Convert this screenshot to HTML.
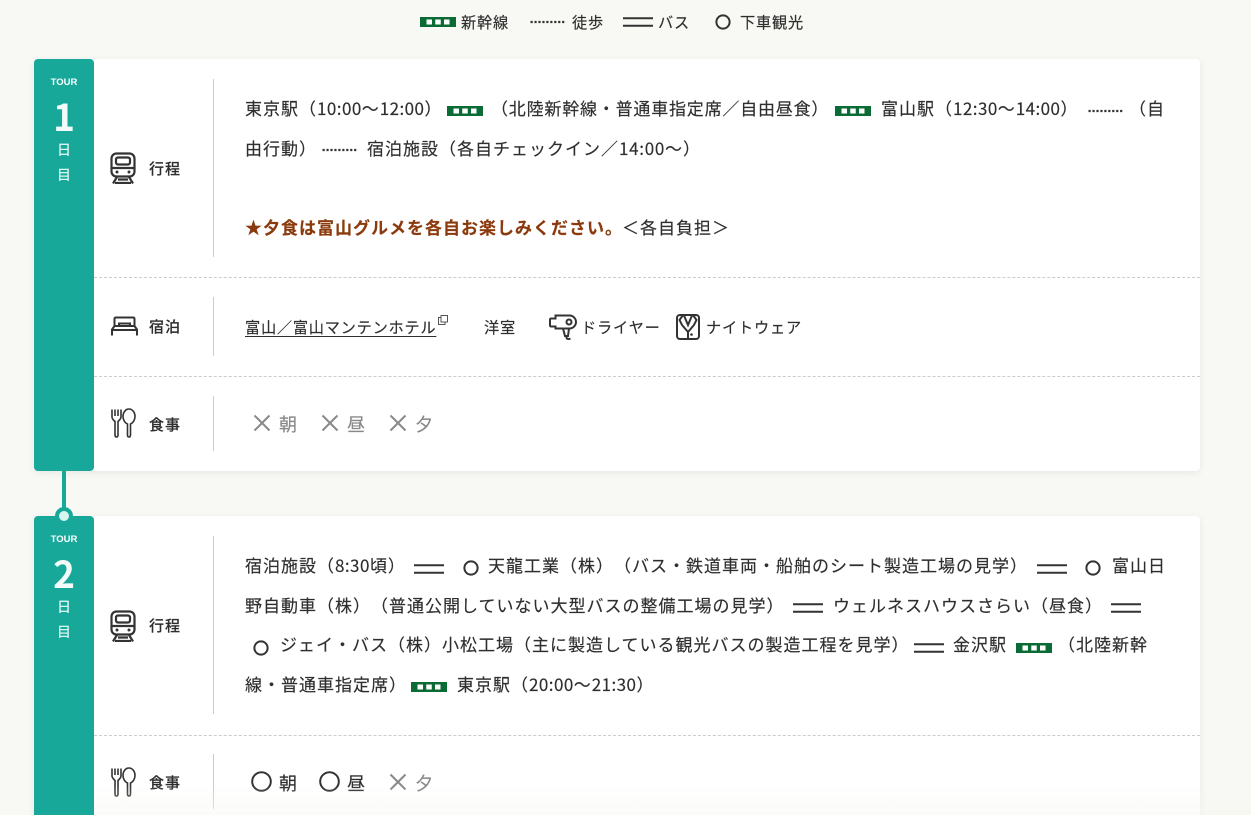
<!DOCTYPE html>
<html lang="ja"><head><meta charset="utf-8"><title>行程</title>
<style>
*{margin:0;padding:0;box-sizing:border-box}
html,body{width:1251px;height:815px;overflow:hidden;background:#f8f8f4}
body{position:relative;font-family:"Noto Sans CJK JP","Liberation Sans",sans-serif;color:#2e2e2e;text-spacing-trim:space-all}
.t{position:absolute;white-space:nowrap;line-height:24px;font-size:17px;letter-spacing:1px;-webkit-text-stroke:.15px currentColor}
.t i{font-style:normal;letter-spacing:.45px}
.s{font-size:15.2px;letter-spacing:.82px}
.lb{font-size:15px;letter-spacing:1px;font-weight:500}
.m{font-size:18px;color:#888;letter-spacing:0}
.d{color:#2e2e2e}
.card{position:absolute;left:34px;width:1166px;background:#fff;border-radius:4px;box-shadow:0 2px 8px rgba(0,0,0,.07)}
.tab{position:absolute;left:34px;width:60px;background:#17a89a;border-radius:4px}
.c{position:absolute;left:34px;width:60px;text-align:center;color:#fff;white-space:nowrap}
.tour{font:bold 9.500px/12px "Liberation Sans",sans-serif}
.num{font-size:37px;line-height:44px;font-weight:700;color:#f2fbf9}
.day{font-size:14px;line-height:20px;font-weight:500;color:#d8f5ee}
.v{position:absolute;left:213px;width:1px;background:#ccc}
.h{position:absolute;left:94px;width:1106px;border-top:1px dashed #ccc}
svg{position:absolute;overflow:visible}
</style></head><body>
<svg width="0" height="0" style="position:absolute"><defs>
<symbol id="sk" viewBox="0 0 36 10"><rect width="36" height="10" fill="#0b6b35"/><rect x="6.500" y="2.500" width="5.500" height="5" fill="#fff"/><rect x="15.250" y="2.500" width="5.500" height="5" fill="#fff"/><rect x="24" y="2.500" width="5.500" height="5" fill="#fff"/></symbol>
<symbol id="dt" viewBox="0 0 36 4"><line x1="0.5" y1="2" x2="36" y2="2" stroke="#333" stroke-width="2.2" stroke-dasharray="2.2 1.75"/></symbol>
<symbol id="bs" viewBox="0 0 30 10"><path d="M0 1.2H30M0 8.8H30" stroke="#333" stroke-width="2" fill="none"/></symbol>
<symbol id="ci" viewBox="0 0 16 16"><circle cx="8" cy="8" r="6.6" fill="none" stroke="#333" stroke-width="2"/></symbol>
<symbol id="train" viewBox="0 0 26 32"><g fill="none" stroke="#333" stroke-width="2.200"><rect x="1.500" y="1.500" width="23" height="23" rx="5"/><rect x="6" y="5.500" width="14" height="7" rx="2"/><path d="M1.500 16H24.500M8 27.500H18M5 31H21M3 31.500L7 25M23 31.500L19 25"/></g><circle cx="7" cy="20" r="1.500" fill="#333"/><circle cx="19" cy="20" r="1.500" fill="#333"/></symbol>
<symbol id="bed" viewBox="0 0 27 20"><g fill="none" stroke="#333" stroke-width="2"><path d="M3.500 10V3Q3.500 1.500 5 1.500H22Q23.500 1.500 23.500 3V10M8 10V7.500H19V10M3.500 10H23.500L26 13.500V19.500M1 19.500V13.500L3.500 10M1 14H26"/></g></symbol>
<symbol id="fk" viewBox="0 0 26 30"><g fill="none" stroke="#333" stroke-width="1.600"><path d="M2 1.500V9C2 11 4 12.500 5 13.500V27C5 28.500 5.500 29 6.500 29S8 28.500 8 27V13.500C9 12.500 11 11 11 9V1.500M5 1.500V8M8 1.500V8"/><path d="M19 1C15.500 1 13 4.500 13 8.500C13 12 15 15 17.500 16V27C17.500 28.500 18 29 19 29S20.500 28.500 20.500 27V16C23 15 25 12 25 8.500C25 4.500 22.500 1 19 1Z"/></g></symbol>
<symbol id="xx" viewBox="0 0 18 18"><path d="M1.500 1.500L16.500 16.500M16.500 1.500L1.500 16.500" stroke="#888" stroke-width="2" fill="none"/></symbol>
</defs></svg>

<!-- legend -->
<svg style="left:420px;top:17px" width="36" height="10"><use href="#sk"/></svg>
<div class="t s" style="left:461px;top:10px">新幹線</div>
<svg style="left:530px;top:20px" width="36" height="4"><use href="#dt"/></svg>
<div class="t s" style="left:572px;top:10px">徒歩</div>
<svg style="left:623px;top:17px" width="30" height="10"><use href="#bs"/></svg>
<div class="t s" style="left:658px;top:10px">バス</div>
<svg style="left:715px;top:14px" width="16" height="16"><use href="#ci"/></svg>
<div class="t s" style="left:740px;top:10px">下車観光</div>

<!-- day 1 -->
<div class="card" style="top:59px;height:412px"></div>
<div class="tab" style="top:59px;height:412px"></div>
<div class="c tour" style="top:77px">TOUR</div>
<div class="c num" style="top:93px">1</div>
<div class="c day" style="top:140px">日</div>
<div class="c day" style="top:165px">目</div>
<div class="v" style="top:79px;height:178px"></div>
<div class="h" style="top:277px"></div>
<div class="v" style="top:297px;height:59px"></div>
<div class="h" style="top:376px"></div>
<div class="v" style="top:396px;height:55px"></div>

<svg style="left:110px;top:152px" width="26" height="32"><use href="#train"/></svg>
<div class="t lb" style="left:149px;top:157px">行程</div>
<svg style="left:111px;top:316px" width="27" height="20"><use href="#bed"/></svg>
<div class="t lb" style="left:149px;top:315px">宿泊</div>
<svg style="left:110px;top:408px" width="26" height="30"><use href="#fk"/></svg>
<div class="t lb" style="left:149px;top:413px">食事</div>

<div class="t" style="left:245px;top:96px">東京駅（<i>10:00</i>～<i>12:00</i>）</div>
<svg style="left:447px;top:106px" width="36" height="10"><use href="#sk"/></svg>
<div class="t" style="left:491px;top:96px;letter-spacing:.8px">（北陸新幹線・普通車指定席／自由昼食）</div>
<svg style="left:835px;top:106px" width="36" height="10"><use href="#sk"/></svg>
<div class="t" style="left:881px;top:96px">富山駅（<i>12:30</i>～<i>14:00</i>）</div>
<svg style="left:1088px;top:109px" width="36" height="4"><use href="#dt"/></svg>
<div class="t" style="left:1129px;top:96px">（自</div>
<div class="t" style="left:245px;top:136px">由行動）</div>
<svg style="left:322px;top:148px" width="36" height="4"><use href="#dt"/></svg>
<div class="t" style="left:367px;top:136px">宿泊施設（各自チェックイン／<i style="letter-spacing:.7px">14:00</i>～）</div>
<div class="t" style="left:245px;top:215px;color:#8a3a0c;font-weight:700">★夕食は富山グルメを各自お楽しみください。</div>
<div class="t" style="left:622px;top:215px">＜各自負担＞</div>

<div class="t s" style="left:245px;top:315px;text-decoration:underline;text-underline-offset:3px;letter-spacing:.76px">富山／富山マンテンホテル</div>
<svg style="left:438px;top:315px" width="10" height="10" fill="none" stroke="#555" stroke-width="1"><path d="M3 .5H9.500V7H3ZM3 2.500H.5V9.500H7V7"/></svg>
<div class="t s" style="left:484px;top:315px">洋室</div>
<svg style="left:549px;top:313px" width="28" height="27" viewBox="0 0 28 27" fill="none" stroke="#333" stroke-width="2"><path d="M6.500 2.500H20.500C24 2.500 27 5.500 27 9S24 15.500 20.500 15.500H6.500V13.500H2C1.400 13.500 1 13 1 12.500V6.500C1 6 1.400 5.500 2 5.500H6.500Z"/><circle cx="20" cy="9" r="2.500"/><path d="M14 15.500L16 23H19L20 15.500M17.500 23V24.500C17.500 26 19.500 26.500 21.500 25.500"/></svg>
<div class="t s" style="left:581px;top:315px">ドライヤー</div>
<svg style="left:676px;top:314px" width="24" height="26" viewBox="0 0 24 26" fill="none" stroke="#333" stroke-width="2"><rect x="1" y="1" width="22" height="24" rx="3"/><path d="M7 1L3.500 6L6 11L12 18L18 11L20.500 6L17 1M8 1.500L12 11L16 1.500M12 18V25"/><circle cx="15.500" cy="20.500" r="1.300" fill="#333" stroke="none"/></svg>
<div class="t s" style="left:706px;top:315px">ナイトウェア</div>

<svg style="left:253px;top:414px" width="18" height="18"><use href="#xx"/></svg>
<div class="t m" style="left:279px;top:412px">朝</div>
<svg style="left:321px;top:414px" width="18" height="18"><use href="#xx"/></svg>
<div class="t m" style="left:347px;top:412px">昼</div>
<svg style="left:389px;top:414px" width="18" height="18"><use href="#xx"/></svg>
<div class="t m" style="left:415px;top:412px">夕</div>

<!-- connector -->
<div style="position:absolute;left:62px;top:471px;width:4px;height:46px;background:#17a89a"></div>

<!-- day 2 -->
<div class="card" style="top:516px;height:320px"></div>
<div class="tab" style="top:516px;height:320px"></div>
<div style="position:absolute;left:55px;top:507px;width:18px;height:18px;border-radius:50%;background:#17a89a"></div>
<div style="position:absolute;left:59px;top:511px;width:10px;height:10px;border-radius:50%;background:#d8f5ee"></div>
<div class="c tour" style="top:534px">TOUR</div>
<div class="c num" style="top:550px">2</div>
<div class="c day" style="top:597px">日</div>
<div class="c day" style="top:622px">目</div>
<div class="v" style="top:536px;height:178px"></div>
<div class="h" style="top:735px"></div>
<div class="v" style="top:754px;height:55px"></div>

<svg style="left:110px;top:610px" width="26" height="32"><use href="#train"/></svg>
<div class="t lb" style="left:149px;top:614px">行程</div>
<svg style="left:110px;top:767px" width="26" height="30"><use href="#fk"/></svg>
<div class="t lb" style="left:149px;top:771px">食事</div>

<div class="t" style="left:245px;top:553px">宿泊施設（<i>8:30</i>頃）</div>
<svg style="left:414px;top:564px" width="30" height="10"><use href="#bs"/></svg>
<svg style="left:463px;top:560px" width="16" height="16"><use href="#ci"/></svg>
<div class="t" style="left:488px;top:553px">天龍工業（株）（バス・鉄道車両・船舶のシート製造工場の見学）</div>
<svg style="left:1037px;top:564px" width="30" height="10"><use href="#bs"/></svg>
<svg style="left:1085px;top:560px" width="16" height="16"><use href="#ci"/></svg>
<div class="t" style="left:1112px;top:553px">富山日</div>

<div class="t" style="left:245px;top:593px">野自動車（株）（普通公開していない大型バスの整備工場の見学）</div>
<svg style="left:793px;top:603px" width="30" height="10"><use href="#bs"/></svg>
<div class="t" style="left:833px;top:593px">ウェルネスハウスさらい（昼食）</div>
<svg style="left:1111px;top:603px" width="30" height="10"><use href="#bs"/></svg>

<svg style="left:253px;top:640px" width="16" height="16"><use href="#ci"/></svg>
<div class="t" style="left:280px;top:632px">ジェイ・バス（株）小松工場（主に製造している観光バスの製造工程を見学）</div>
<svg style="left:914px;top:643px" width="30" height="10"><use href="#bs"/></svg>
<div class="t" style="left:953px;top:632px">金沢駅</div>
<svg style="left:1016px;top:643px" width="36" height="10"><use href="#sk"/></svg>
<div class="t" style="left:1058px;top:632px">（北陸新幹</div>

<div class="t" style="left:245px;top:672px">線・普通車指定席）</div>
<svg style="left:411px;top:682px" width="36" height="10"><use href="#sk"/></svg>
<div class="t" style="left:457px;top:672px">東京駅（<i>20:00</i>～<i>21:30</i>）</div>

<svg style="left:251px;top:771px" width="21" height="21" viewBox="0 0 21 21"><circle cx="10.500" cy="10.500" r="9.300" fill="none" stroke="#333" stroke-width="2"/></svg>
<div class="t m d" style="left:279px;top:771px">朝</div>
<svg style="left:319px;top:771px" width="21" height="21" viewBox="0 0 21 21"><circle cx="10.500" cy="10.500" r="9.300" fill="none" stroke="#333" stroke-width="2"/></svg>
<div class="t m d" style="left:347px;top:771px">昼</div>
<svg style="left:389px;top:773px" width="18" height="18"><use href="#xx"/></svg>
<div class="t m" style="left:415px;top:771px">夕</div>

<div style="position:absolute;left:94px;top:785px;width:1157px;height:30px;background:linear-gradient(rgba(247,247,242,0),rgba(247,247,242,.5))"></div>
</body></html>
